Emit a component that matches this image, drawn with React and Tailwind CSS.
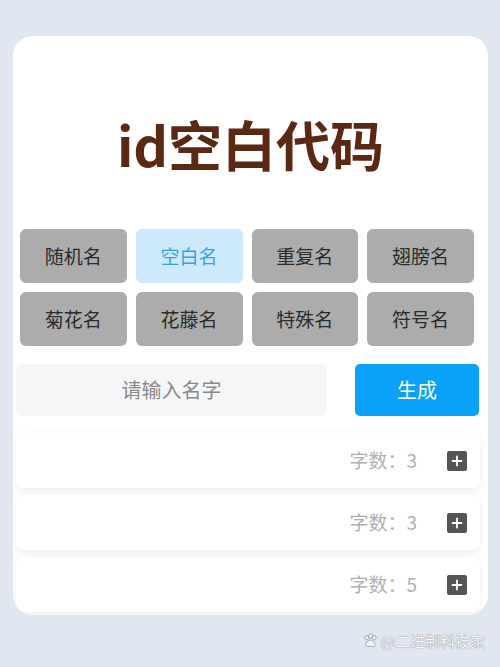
export default function App() {
  const font = { fontFamily: '"Noto Sans CJK SC", "Noto Sans", sans-serif' };
  const tags = ["随机名", "空白名", "重复名", "翅膀名", "菊花名", "花藤名", "特殊名", "符号名"];
  const rows = [3, 3, 5];
  return (
    <div className="w-[500px] h-[667px] bg-[#e1e7f0] overflow-hidden relative" style={font}>
      <div className="ml-[13px] mt-[36px] w-[475px] h-[579px] rounded-[20px] bg-white flex flex-col overflow-hidden">
        <div className="h-[193px] pt-[22px] flex items-center justify-center">
          <span className="text-[54px] font-bold text-[#5b2913] leading-none tracking-[0px]">id空白代码</span>
        </div>
        <div className="ml-[7px] w-[454px] grid grid-cols-4 gap-x-[9px] gap-y-[9px]">
          {tags.map((t, i) => (
            <div
              key={t}
              className={`h-[54px] rounded-[6px] flex items-center justify-center text-[19px] ${
                i === 1 ? "bg-[#cde9fc] text-[#3b9fe6]" : "bg-[#acacac] text-[#2b2b2b]"
              }`}
            >
              {t}
            </div>
          ))}
        </div>
        <div className="mt-[18px] ml-[3px] flex items-center">
          <div className="w-[311px] h-[52px] rounded-[6px] bg-[#f5f6f8] flex items-center justify-center text-[20px] text-[#8a8a8a]">
            请输入名字
          </div>
          <div className="ml-[28px] w-[124px] h-[52px] rounded-[5px] bg-[#0ba1f6] flex items-center justify-center text-[20px] text-white">
            生成
          </div>
        </div>
        <div className="mt-[17px] ml-[3px] w-[464px] flex flex-col gap-[7px]">
          {rows.map((n, i) => (
            <div
              key={i}
              className="h-[55px] rounded-[8px] bg-white shadow-[0_3px_10px_rgba(0,0,0,0.07)] flex items-center justify-end pr-[13px]"
            >
              <span className="text-[19px] text-[#b0b0b0]">字数：{n}</span>
              <div className="ml-[30px] w-[20px] h-[20px] rounded-[2px] bg-[#555555] flex items-center justify-center">
                <svg width="12" height="12" viewBox="0 0 12 12">
                  <path d="M6 1.5V10.5M1.5 6H10.5" stroke="white" strokeWidth="1.8" strokeLinecap="round" />
                </svg>
              </div>
            </div>
          ))}
        </div>
      </div>
      <div className="absolute left-[363px] top-[633px] flex items-center gap-[3px] text-[15px] text-[#f4f6f9] leading-none" style={{ textShadow: "0 0 1px #8a919c, 0 0 1px #8a919c" }}>
        <svg width="15" height="15" viewBox="0 0 16 16" fill="#f4f6f9" stroke="#8a919c" strokeWidth="0.8">
          <ellipse cx="4" cy="5" rx="2" ry="2.4" />
          <ellipse cx="12" cy="5" rx="2" ry="2.4" />
          <ellipse cx="8" cy="3" rx="2" ry="2.4" />
          <path d="M8 7.5c-2.5 0-5 3-5 5 0 1.5 1.5 2 2.5 2s1.5-.6 2.5-.6 1.5.6 2.5.6 2.5-.5 2.5-2c0-2-2.5-5-5-5z" />
        </svg>
        <span>@二进制科技家</span>
      </div>
    </div>
  );
}
